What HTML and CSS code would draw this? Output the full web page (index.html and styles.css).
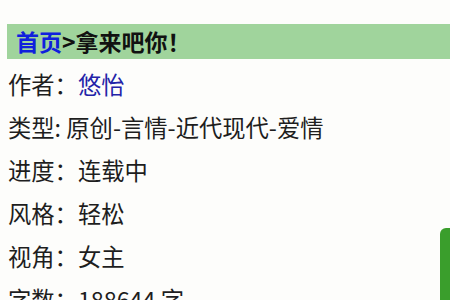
FILE: index.html
```html
<!DOCTYPE html>
<html lang="zh-CN">
<head>
<meta charset="utf-8">
<link rel="stylesheet" href="styles.css">
</head>
<body>
<div class="page">
  <div class="crumb"><a class="home">首页</a>&gt;拿来吧你！</div>
  <ul class="info">
    <li>作者：<a class="author">悠怡</a></li>
    <li>类型: 原创-言情-近代现代-爱情</li>
    <li>进度：连载中</li>
    <li>风格：轻松</li>
    <li>视角：女主</li>
    <li>字数：188644 字</li>
  </ul>
</div>
<div class="side-tab"></div>
</body>
</html>
```
FILE: styles.css
```css
html, body {
  margin: 0;
  padding: 0;
  background: #fdfdfb;
  overflow: hidden;
  height: 300px;
}
body {
  font-family: "Noto Sans CJK SC", "Noto Sans", sans-serif;
  color: #1e1e1e;
}
.page {
  padding: 24px 0 0 7px;
}
.crumb {
  background: #a0d49c;
  height: 35px;
  line-height: 35px;
  padding-left: 9px;
  font-size: 23px;
  font-weight: bold;
  color: #111;
}
.home {
  color: #1020dd;
}
.info {
  list-style: none;
  margin: 4px 0 0 1px;
  padding: 0;
}
.info li {
  font-size: 23.3px;
  line-height: 43px;
  height: 43px;
  white-space: nowrap;
}
.author {
  color: #2323a8;
}
.side-tab {
  position: absolute;
  right: 0;
  top: 228px;
  width: 10px;
  height: 80px;
  background: #3a9e2c;
  border-top-left-radius: 6px;
}
```
